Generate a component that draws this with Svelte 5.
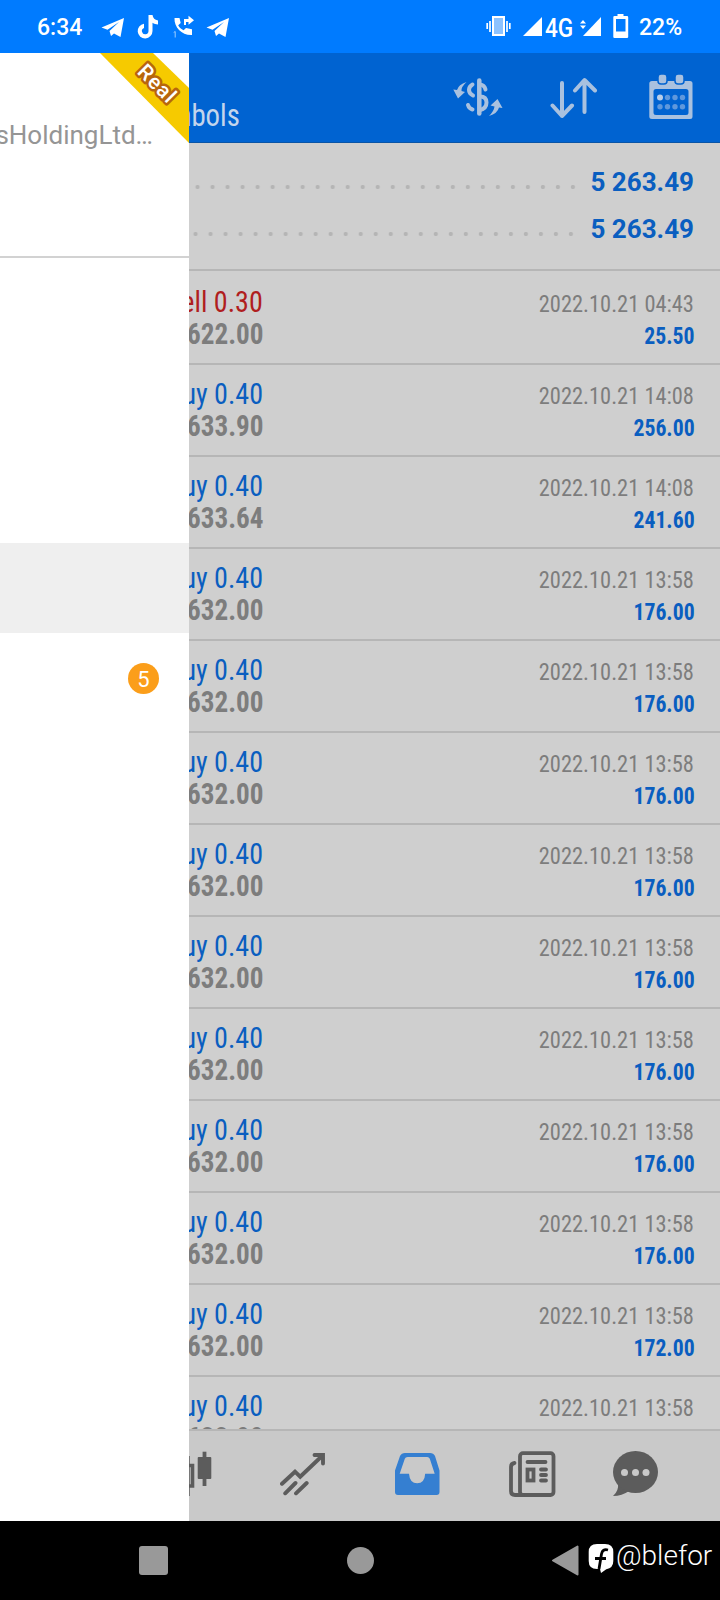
<script>
  const totals = ['5 263.49', '5 263.49']

  const deals = [
    { side: 'sell', volume: '0.30', price: '622.00', time: '2022.10.21 04:43', profit: '25.50' },
    { side: 'buy', volume: '0.40', price: '633.90', time: '2022.10.21 14:08', profit: '256.00' },
    { side: 'buy', volume: '0.40', price: '633.64', time: '2022.10.21 14:08', profit: '241.60' },
    ...Array.from({ length: 8 }, () => ({
      side: 'buy',
      volume: '0.40',
      price: '632.00',
      time: '2022.10.21 13:58',
      profit: '176.00'
    })),
    { side: 'buy', volume: '0.40', price: '632.00', time: '2022.10.21 13:58', profit: '172.00' },
    { side: 'buy', volume: '0.40', price: '632.00', time: '2022.10.21 13:58', profit: '172.00' }
  ]
</script>

{#snippet plane()}
  <svg class="plane" width="24" height="24" viewBox="0 0 24 24">
    <path d="M.5 12.500 L23 3 L19.500 22 L13 18.500 L10 21 L8.500 16 L18 7 L6.500 14.800 Z" fill="#fff" />
  </svg>
{/snippet}

<div class="phone">
  <header class="status">
    <span class="clock">6:34</span>
    {@render plane()}
    <svg class="tiktok" width="22" height="24" viewBox="0 0 22 24">
      <path
        d="M11.500 0h4c.4 3 2.200 5 5.500 5.500v4c-2 0-4-.6-5.500-1.700V16a7.400 7.400 0 1 1-8.500-7.300v4.200A3.300 3.300 0 1 0 11.500 16z"
        fill="#fff"
      />
    </svg>
    <svg class="call" width="22" height="24" viewBox="0 0 22 24">
      <path
        d="M1.500 3h5l1.200 5-2.500 2.200c1.300 2.400 3 3.900 5.400 5l2.400-2.200 6 1.300V20C9 20.500 1 12.500 1.500 3z"
        fill="#fff"
      />
      <path d="M11 10V4h4.500V.8L21 5.200l-5.500 4.500V7H13v3z" fill="#fff" />
      <path d="M.7 17.500l1.500-1v6" fill="none" stroke="#9cceff" />
    </svg>
    {@render plane()}
    <svg class="vibrate" width="26" height="22" viewBox="0 0 26 22">
      <rect x="7" y="2" width="11" height="18" fill="#8cc2ff" stroke="#fff" stroke-width="2" />
      <path d="M1.200 8v6M4 6v11M21 6v11M23.800 8v6" stroke="#fff" stroke-width="1.700" />
    </svg>
    <svg class="bars" width="20" height="19" viewBox="0 0 20 19">
      <path d="M0 19L19 0v19z" fill="#fff" />
    </svg>
    <span class="net"><span>4G</span></span>
    <svg class="bars2" width="22" height="19" viewBox="0 0 22 19">
      <path d="M3 19L21 0v19z" fill="#fff" />
      <path d="M0 6.500L3 3l3 3.500zM0 8.500h6L3 12z" fill="#fff" />
    </svg>
    <svg class="battery" width="16" height="24" viewBox="0 0 16 24">
      <path
        d="M4.500 0h6v2H14q1.200 0 1.200 1.200V23q0 1-1.200 1H1.500Q.3 24 .3 23V3.200Q.3 2 1.500 2h3zM3 5v12.500h9.500V5z"
        fill="#fff"
        fill-rule="evenodd"
      />
    </svg>
    <span class="percent">22%</span>
  </header>

  <div class="body">
    <aside class="drawer">
      <div class="account">
        <svg class="ribbon" width="89" height="90" viewBox="0 0 89 90">
          <path d="M0 0h53l36 35v55z" fill="#f6ca00" />
          <text x="57.500" y="38" transform="rotate(45 57.500 30.500)" text-anchor="middle">Real</text>
        </svg>
        <div class="company"><span>sHoldingLtd…</span></div>
      </div>
      <div class="menu">
        <div class="menu-item active"></div>
        <div class="menu-item"><span class="badge">5</span></div>
      </div>
    </aside>

    <main class="history">
      <div class="toolbar">
        <div class="title"><span>Symbols</span></div>
        <svg class="currency" width="50" height="40" viewBox="0 0 50 40">
          <g fill="none" stroke="#a9c1df" stroke-width="4" stroke-linecap="round">
            <path d="M26.300 3.500v33" stroke-width="4.500" />
            <path d="M27 7.500q4.500.5 5.500 5M27 19.500q6.500 0 6.500 6t-6.500 7.500" />
            <path d="M19.500 7.500q-3.500 2-3.500 5.500t4 5.500M15 28q1 3.500 4.500 4.500" />
          </g>
          <path
            d="M13.500 5q-5.500 5-5 9l3.500 1-7 6.500L.3 12.500 4 13q1.500-5.500 9.500-8zM36 39q5-5 5.500-9.500l-4-1L44.500 22l5 9-3.500-.5q-1.500 6-10 8.500z"
            fill="#a9c1df"
          />
        </svg>
        <svg class="sort" width="48" height="42" viewBox="0 0 48 42">
          <path
            d="M12 6v33M2.500 28.500L12 39l10-10.500M34.500 35V4M25 13.500L34.500 3 45 13.500"
            fill="none"
            stroke="#a9c1df"
            stroke-width="4"
            stroke-linecap="round"
            stroke-linejoin="round"
          />
        </svg>
        <svg class="calendar" width="44" height="46" viewBox="0 0 44 46">
          <path
            d="M3 7h38q2.500 0 2.500 2.500v33Q43.500 45 41 45H3Q.3 45 .3 42.500v-33Q.3 7 3 7zM7 15q-2.500 0-2.500 2.500v21Q4.500 41 7 41h30q2.500 0 2.500-2.500v-21Q39.500 15 37 15z"
            fill="#a9c1df"
            fill-rule="evenodd"
          />
          <g fill="#a9c1df" stroke="#0063d1" stroke-width="1.500">
            <rect x="9" y="0" width="9" height="10" rx="3" />
            <rect x="26" y="0" width="9" height="10" rx="3" />
          </g>
          <circle cx="11" cy="23.500" r="3" fill="#b9cee8" />
          <g fill="#5f98dc">
            <circle cx="18.500" cy="23.500" r="2.700" />
            <circle cx="26" cy="23.500" r="2.700" />
            <circle cx="33.500" cy="23.500" r="2.700" />
            <circle cx="11" cy="32.700" r="2.700" />
            <circle cx="18.500" cy="32.700" r="2.700" />
            <circle cx="26" cy="32.700" r="2.700" />
            <circle cx="33.500" cy="32.700" r="2.700" />
          </g>
        </svg>
      </div>

      <div class="summary">
        {#each totals as total}
          <div class="total">
            <i class="dots"></i>
            <b>{total}</b>
          </div>
        {/each}
      </div>

      <div class="deals">
        {#each deals as deal}
          <div class="deal">
            <div class="left">
              <span class="side {deal.side}">{deal.side} {deal.volume}</span>
              <span class="price">{deal.price}</span>
            </div>
            <div class="right">
              <span class="time">{deal.time}</span>
              <span class="profit">{deal.profit}</span>
            </div>
          </div>
        {/each}
      </div>

      <nav class="tabs">
        <svg class="candles" width="23" height="48" viewBox="0 0 23 48">
          <path d="M0 6v40" stroke="#5c5c5c" stroke-width="1.500" />
          <path d="M-6 15.500H3.500v20.500H-6" fill="none" stroke="#5c5c5c" stroke-width="3.600" />
          <path d="M15.500 1.700v34.300" stroke="#5c5c5c" stroke-width="3.800" />
          <rect x="8.700" y="7" width="13.600" height="22" rx="1" fill="#5c5c5c" />
        </svg>
        <svg class="trend" width="46" height="48" viewBox="0 0 46 48">
          <path
            d="M2 33.800L15 21.700l5.200 5L42 6M34.500 5H43v8.500M5.200 43.300L15.500 33M16 43.300L26.700 33"
            fill="none"
            stroke="#5c5c5c"
            stroke-width="3.900"
            stroke-linecap="round"
          />
        </svg>
        <svg class="inbox" width="46" height="48" viewBox="0 0 46 48">
          <path
            d="M10 3h25q3.500 0 5 3L44.500 20.500V42q0 3-3 3H3q-3 0-3-3V20.500L5 6Q6.500 3 10 3zM12.500 7q-2 0-2.700 1.800L4.700 23.700H14q.8 9.600 8.200 9.600t8-9.600h9.500L34.800 8.800Q34 7 32.200 7z"
            fill="#357fd1"
            fill-rule="evenodd"
          />
        </svg>
        <svg class="news" width="48" height="48" viewBox="0 0 48 48">
          <g fill="none" stroke="#5c5c5c" stroke-width="3.800" stroke-linecap="round">
            <rect x="12" y="3.200" width="33.500" height="41.800" rx="3" />
            <path d="M6.500 13Q3 13.500 3 17v24q0 4 4 4h8M19.500 12h18M33 19.500h5M33 25h5M33 30.500h5" />
            <rect x="19.500" y="19.500" width="6" height="11" stroke-linecap="butt" />
          </g>
        </svg>
        <svg class="chat" width="48" height="48" viewBox="0 0 48 48">
          <path d="M6 33q1 8-5 13 9 0 16-5z" fill="#5c5c5c" />
          <ellipse cx="23.500" cy="22" rx="22.500" ry="21" fill="#5c5c5c" />
          <g fill="#c9c9c9">
            <circle cx="12.500" cy="22.500" r="3.500" />
            <circle cx="23.500" cy="22.500" r="3.500" />
            <circle cx="34" cy="22.500" r="3.500" />
          </g>
        </svg>
      </nav>
    </main>
  </div>

  <footer class="navbar">
    <i class="recent"></i>
    <i class="home"></i>
    <svg class="back" width="28" height="32" viewBox="0 0 28 32">
      <path d="M1 15.500L25.500 1.500v28z" fill="#999" stroke="#999" stroke-width="2" stroke-linejoin="round" />
    </svg>
    <svg class="logo" width="26" height="30" viewBox="0 0 26 30">
      <path d="M9 0h8q8.300 0 8.300 8v9q0 7-7 8.200L13 29l-1-4H9Q.7 25 .7 17V8Q.7 0 9 0z" fill="#fff" />
      <path d="M20 6q-5.500-1.500-6.500 4L11 25M7 14.500h11" fill="none" stroke="#000" stroke-width="2.800" />
    </svg>
    <span class="handle">@blefor</span>
  </footer>
</div>

<style>
  :global(body) {
    margin: 0;
  }

  .phone {
    display: flex;
    flex-direction: column;
    width: 720px;
    height: 1600px;
    overflow: hidden;
    background: #000;
    font-family: Roboto, sans-serif;
  }

  svg {
    display: block;
    flex: none;
  }

  .status {
    display: flex;
    align-items: flex-start;
    box-sizing: border-box;
    height: 53px;
    padding: 15px 0 0 37px;
    background: #007bff;
    color: #fff;
    font-size: 23px;
    line-height: 26px;
    font-weight: 500;
  }
  .clock {
    width: 64px;
  }
  .plane {
    margin-right: 12px;
  }
  .call {
    margin: 0 11px 0 14px;
  }
  .vibrate {
    margin: 0 11px 0 244px;
  }
  .bars {
    margin-top: 2px;
  }
  .net {
    box-sizing: border-box;
    width: 37px;
    padding-left: 2px;
    font-size: 26px;
  }
  .net span {
    display: inline-block;
    transform: scaleX(0.87);
    transform-origin: left;
  }
  .bars2 {
    margin: 2px 11px 0 0;
  }
  .battery {
    margin: -1px 10px 0 0;
  }

  .body {
    display: grid;
    grid-template-columns: 189px 531px;
    height: 1468px;
  }

  .drawer {
    background: #fff;
    overflow: hidden;
  }
  .account {
    box-sizing: border-box;
    height: 205px;
    border-bottom: 2px solid #d2d2d2;
  }
  .ribbon {
    height: 90px;
    margin: 0 0 -24px 100px;
  }
  .ribbon text {
    fill: #fff;
    stroke: #b8660c;
    stroke-width: 5px;
    stroke-linejoin: round;
    paint-order: stroke;
    font-size: 21px;
    font-weight: 500;
    letter-spacing: 1px;
  }
  .company {
    display: flex;
    justify-content: flex-end;
    width: 153px;
    overflow: hidden;
    color: #959595;
    font-size: 26px;
    line-height: 32px;
  }
  .menu {
    padding-top: 285px;
  }
  .menu-item {
    display: flex;
    align-items: center;
    justify-content: flex-end;
    height: 90px;
    padding-right: 30px;
  }
  .menu-item.active {
    background: #efefef;
  }
  .badge {
    width: 31px;
    height: 31px;
    border-radius: 50%;
    background: #fb9e1a;
    color: #fff;
    font-size: 22px;
    line-height: 33px;
    text-align: center;
  }

  .history {
    display: flex;
    flex-direction: column;
    min-width: 0;
    height: 1468px;
    background: #cfcfcf;
    overflow: hidden;
  }
  .toolbar {
    display: flex;
    flex: none;
    align-items: flex-start;
    box-sizing: border-box;
    height: 90px;
    padding-top: 21px;
    background: #0063d1;
    border-bottom: 1px solid #0a55a6;
  }
  .title {
    display: flex;
    justify-content: flex-end;
    width: 51px;
    margin: 21px 213px 0 0;
    overflow: hidden;
    color: #c3d5ec;
    font-size: 32px;
    font-stretch: condensed;
    line-height: 40px;
  }
  .title span {
    transform: scaleX(0.9);
    transform-origin: right;
  }
  .currency {
    margin-top: 3px;
  }
  .sort {
    margin: 3px 51px 0 47px;
  }

  .summary {
    flex: none;
    box-sizing: border-box;
    height: 128px;
    padding-top: 15px;
    border-bottom: 2px solid #b6b6b6;
  }
  .total {
    display: flex;
    align-items: center;
    justify-content: space-between;
    height: 47px;
    padding-right: 26px;
    color: #0a5ec0;
    font-size: 26px;
    line-height: 47px;
  }
  .total b {
    padding-top: 2px;
  }
  .dots {
    flex: none;
    width: 391px;
    height: 6px;
    margin: 10px 0 0 1px;
    background: radial-gradient(circle at center, #b5b5b5 1.700px, transparent 2.500px) 0 0 / 15.030px 6px;
  }
  .total + .total .dots {
    margin-left: -1px;
  }

  .deals {
    flex: 1;
    min-height: 0;
    padding-top: 2px;
    overflow: hidden;
  }
  .deal {
    display: flex;
    justify-content: space-between;
    box-sizing: border-box;
    height: 92px;
    padding: 13px 26px 0 0;
    border-bottom: 2px solid #b6b6b6;
    font-family: 'Roboto Condensed', Roboto, sans-serif;
    font-stretch: condensed;
    line-height: 32px;
  }
  .left,
  .right {
    display: flex;
    flex-direction: column;
    align-items: flex-end;
    white-space: nowrap;
  }
  .left {
    width: 75px;
    overflow: hidden;
    font-size: 30px;
  }
  /* the digits are set tighter than the condensed cut */
  .side,
  .time {
    transform: scaleX(0.935);
    transform-origin: right;
  }
  .price,
  .profit {
    font-weight: 700;
    transform: scaleX(0.905);
    transform-origin: right;
  }
  .side {
    margin-right: 1px;
  }
  .sell {
    color: #b01e1e;
  }
  .buy {
    color: #0a5ec0;
  }
  .price {
    color: #7d7d7d;
  }
  .right {
    padding-top: 2px;
    font-size: 24px;
  }
  .time {
    color: #7d7d7d;
  }
  .profit {
    margin-right: -0.5px;
    color: #0a5ec0;
  }

  .tabs {
    display: flex;
    flex: none;
    align-items: flex-start;
    box-sizing: border-box;
    height: 92px;
    padding-top: 19px;
    background: #c9c9c9;
    border-top: 2px solid #b6b6b6;
  }
  .trend {
    margin: 0 69px 0 68px;
  }
  .news {
    margin: 0 56px 0 67px;
  }

  .navbar {
    display: flex;
    align-items: flex-start;
    height: 79px;
    color: #fff;
  }
  .recent {
    width: 29px;
    height: 29px;
    margin: 25px 179px 0 139px;
    border-radius: 3px;
    background: #999;
  }
  .home {
    width: 27px;
    height: 27px;
    margin: 26px 178px 0 0;
    border-radius: 50%;
    background: #999;
  }
  .back {
    margin: 24px 8px 0 0;
  }
  .logo {
    margin: 23px 2px 0 0;
  }
  .handle {
    margin-top: 18px;
    font-size: 28px;
    font-weight: 350;
    line-height: 34px;
  }
</style>
